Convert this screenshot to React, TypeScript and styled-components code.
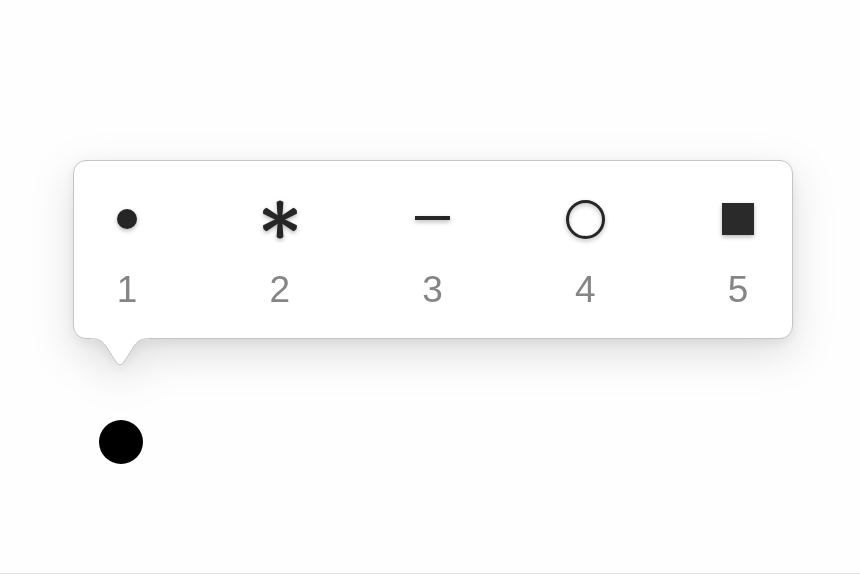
import React from "react";
import styled, { createGlobalStyle } from "styled-components";

const Global = createGlobalStyle`
  html, body { margin: 0; padding: 0; background: #fefefe; }
  body { font-family: "Liberation Sans", Arial, sans-serif; }
`;

const Page = styled.div`
  box-sizing: border-box;
  width: 860px;
  height: 574px;
  padding: 160px 0 0 73px;
  border-bottom: 1px solid #e4e4e4;
  display: flex;
  flex-direction: column;
  align-items: flex-start;
  overflow: hidden;
`;

const Popup = styled.div`
  position: relative;
  box-sizing: border-box;
  width: 720px;
  height: 179px;
  background: #ffffff;
  border: 1px solid #c4c4c4;
  border-radius: 13px;
  padding: 38px 14px 0 13px;
  display: flex;
  justify-content: space-between;
  filter: drop-shadow(0 4px 6px rgba(0, 0, 0, 0.06))
    drop-shadow(0 14px 20px rgba(0, 0, 0, 0.13));
`;

const Tail = styled.svg`
  position: absolute;
  left: 16px;
  top: 100%;
  width: 60px;
  height: 29px;
  overflow: visible;
`;

const Item = styled.div`
  width: 80px;
  display: flex;
  flex-direction: column;
  align-items: center;
  gap: 31px;
`;

const IconBox = styled.div`
  height: 40px;
  width: 80px;
  display: flex;
  align-items: center;
  justify-content: center;
  filter: drop-shadow(0 2px 2px rgba(0, 0, 0, 0.28));
`;

const Number = styled.div`
  font-family: "Liberation Sans", Arial, sans-serif;
  font-size: 37px;
  line-height: 40px;
  color: #858585;
`;

const Dot = styled.div`
  width: 20px;
  height: 20px;
  border-radius: 50%;
  background: #262626;
`;

const Dash = styled.div`
  width: 35px;
  height: 4px;
  margin-top: -2px;
  background: #262626;
`;

const Ring = styled.div`
  box-sizing: border-box;
  width: 39px;
  height: 39px;
  border-radius: 50%;
  border: 3px solid #262626;
`;

const Square = styled.div`
  width: 32px;
  height: 32px;
  margin-top: -1px;
  background: #2a2a2a;
`;

const Marker = styled.div`
  width: 44px;
  height: 44px;
  margin: 81px 0 0 26px;
  border-radius: 50%;
  background: #000;
`;

const Asterisk = () => (
  <svg width="38" height="41" viewBox="-19 -20.5 38 41">
    {[0, 60, 120].map((a) => (
      <g key={a} transform={`rotate(${a})`}>
        <path d="M-2.2 0 L-3.4 -17.5 Q0 -20.5 3.4 -17.5 L2.2 0 Z" fill="#262626" />
        <path d="M-2.2 0 L-3.4 17.5 Q0 20.5 3.4 17.5 L2.2 0 Z" fill="#262626" />
      </g>
    ))}
  </svg>
);

const items: { n: number; icon: React.ReactNode }[] = [
  { n: 1, icon: <Dot /> },
  { n: 2, icon: <Asterisk /> },
  { n: 3, icon: <Dash /> },
  { n: 4, icon: <Ring /> },
  { n: 5, icon: <Square /> },
];

export default function App() {
  return (
    <>
      <Global />
      <Page>
        <Popup>
          {items.map((it) => (
            <Item key={it.n}>
              <IconBox>{it.icon}</IconBox>
              <Number>{it.n}</Number>
            </Item>
          ))}
          <Tail viewBox="0 0 60 29">
            <rect x="1" y="-0.5" width="58" height="2" fill="#ffffff" />
            <path
              d="M0 0.5 C7 0.5 11 1.5 16 8 L26 24 Q30 29.5 34 24 L44 8 C49 1.5 53 0.5 60 0.5"
              fill="#ffffff"
              stroke="#c4c4c4"
              strokeWidth="1"
            />
          </Tail>
        </Popup>
        <Marker />
      </Page>
    </>
  );
}
